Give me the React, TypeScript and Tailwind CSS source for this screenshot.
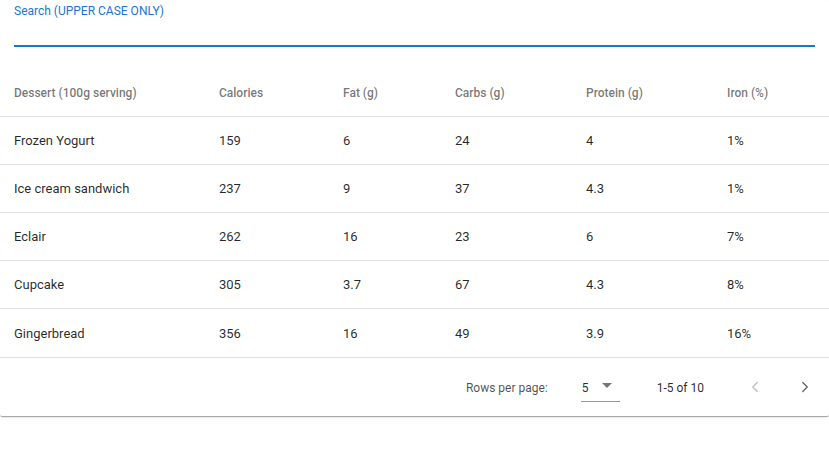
import { ChevronLeft, ChevronRight } from "lucide-react";

const desserts = [
  { name: "Frozen Yogurt", calories: 159, fat: 6, carbs: 24, protein: 4, iron: "1%" },
  { name: "Ice cream sandwich", calories: 237, fat: 9, carbs: 37, protein: 4.3, iron: "1%" },
  { name: "Eclair", calories: 262, fat: 16, carbs: 23, protein: 6, iron: "7%" },
  { name: "Cupcake", calories: 305, fat: 3.7, carbs: 67, protein: 4.3, iron: "8%" },
  { name: "Gingerbread", calories: 356, fat: 16, carbs: 49, protein: 3.9, iron: "16%" },
];

const headers = [
  { text: "Dessert (100g serving)", width: "w-[205px]" },
  { text: "Calories", width: "w-[124px]" },
  { text: "Fat (g)", width: "w-[112px]" },
  { text: "Carbs (g)", width: "w-[131px]" },
  { text: "Protein (g)", width: "w-[141px]" },
  { text: "Iron (%)", width: "" },
];

export default function App() {
  return (
    <div className="min-h-[471px] bg-white font-['Roboto',sans-serif]">
      <div className="bg-white shadow-[0_2px_1px_-1px_rgba(0,0,0,0.2),0_1px_1px_0_rgba(0,0,0,0.14),0_1px_3px_0_rgba(0,0,0,0.12)] rounded-[2px]">
        <div className="px-[14px] pt-[3px] pb-[22px]">
          <div className="text-[12px] leading-[16px] text-[#1976d2]">Search (UPPER CASE ONLY)</div>
          <div className="h-[26px]"></div>
          <div className="h-[2px] bg-[#1976d2] w-[801px]"></div>
        </div>

        <table className="w-full border-collapse table-fixed">
          <thead>
            <tr className="h-[47px] border-b border-[#e0e0e0]">
              {headers.map(h => (
                <th
                  key={h.text}
                  className={`${h.width} pl-[14px] pt-[2px] text-left text-[12px] font-medium text-black/55`}
                >
                  {h.text}
                </th>
              ))}
            </tr>
          </thead>
          <tbody>
            {desserts.map((d, i) => (
              <tr
                key={d.name}
                className={`${i === desserts.length - 1 ? "h-[49px]" : "h-[48px]"} border-b border-[#e0e0e0] text-[13px] text-black/85`}
              >
                <td className="pl-[14px] pt-[2px]">{d.name}</td>
                <td className="pl-[14px] pt-[2px]">{d.calories}</td>
                <td className="pl-[14px] pt-[2px]">{d.fat}</td>
                <td className="pl-[14px] pt-[2px]">{d.carbs}</td>
                <td className="pl-[14px] pt-[2px]">{d.protein}</td>
                <td className="pl-[14px] pt-[2px]">{d.iron}</td>
              </tr>
            ))}
          </tbody>
        </table>

        <div className="h-[58px] flex items-center justify-end text-[12px] text-black/55">
          <span className="mr-[33px] mt-[2px] text-black/70">Rows per page:</span>
          <div className="relative w-[39px] h-[30px] mr-[37px] mt-[1px] border-b border-black/40 flex items-center">
            <span className="text-[12px] text-black/85 ml-[1px] mt-[3px]">5</span>
            <svg className="absolute left-[14px] top-[1px]" width="24" height="24" viewBox="0 0 24 24">
              <path d="M7 10l5 5 5-5z" fill="rgba(0,0,0,0.54)" />
            </svg>
          </div>
          <span className="mr-[33px] mt-[2px] text-black/85">1-5 of 10</span>
          <button className="w-[36px] h-[36px] flex items-center justify-center text-black/25 mr-[14px]">
            <ChevronLeft size={18} strokeWidth={1.8} />
          </button>
          <button className="w-[36px] h-[36px] flex items-center justify-center text-black/60 mr-[6px]">
            <ChevronRight size={18} strokeWidth={1.8} />
          </button>
        </div>
      </div>
    </div>
  );
}
